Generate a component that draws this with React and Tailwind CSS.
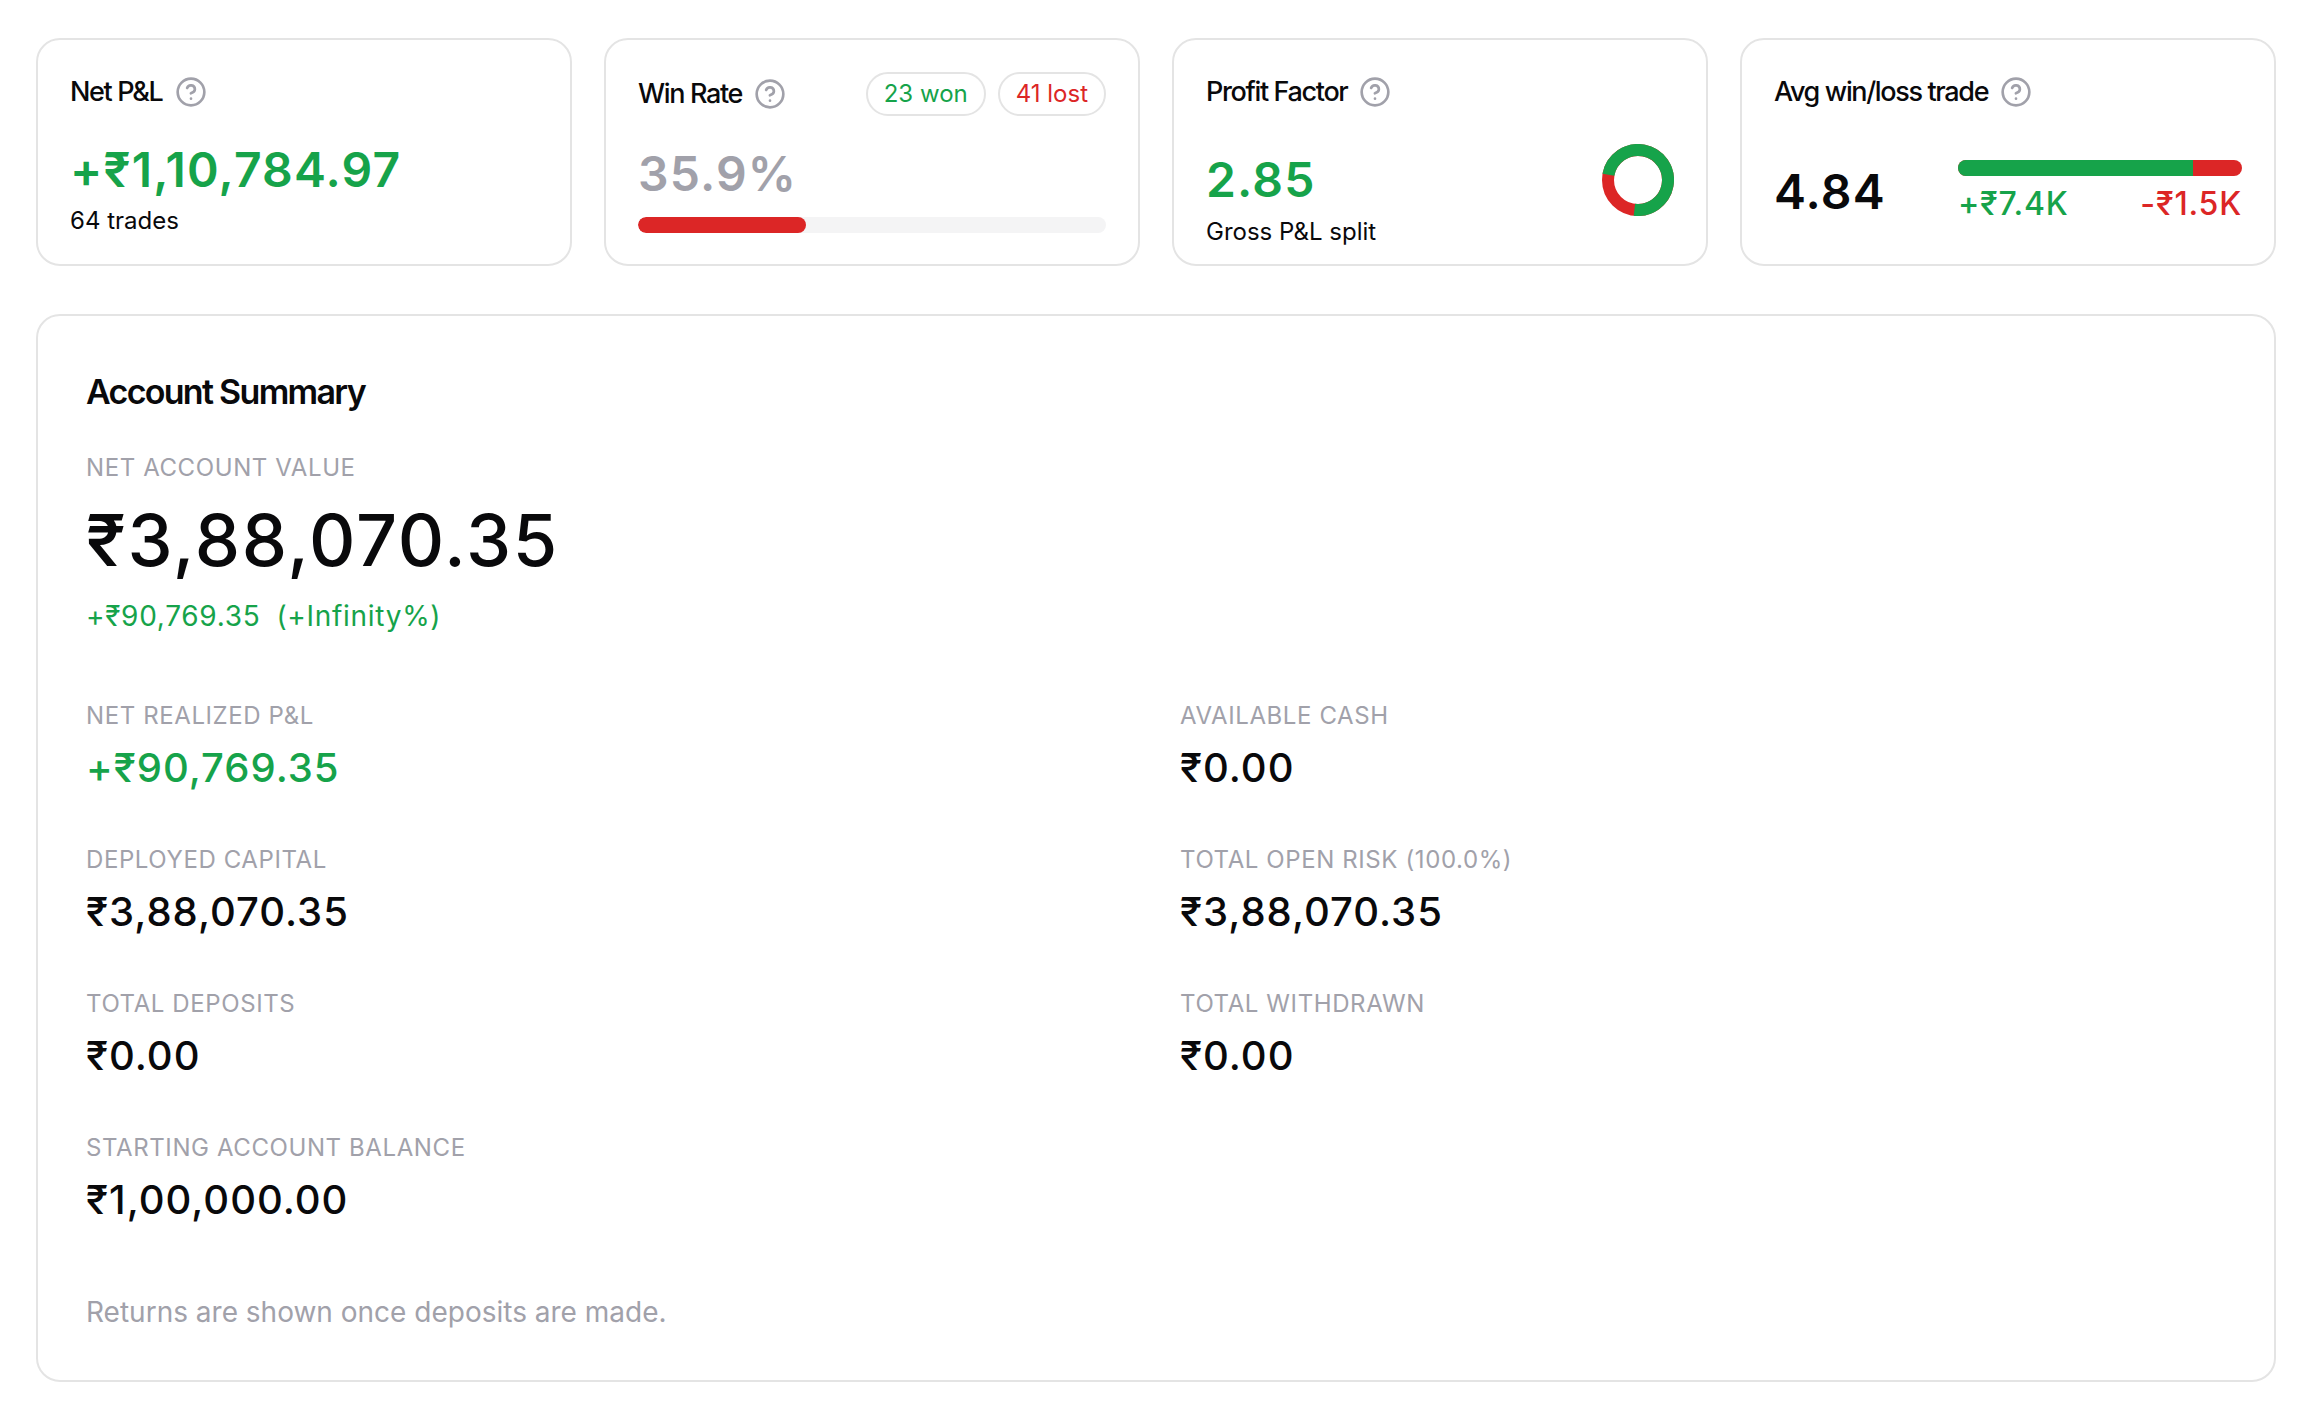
import { CircleHelp } from "lucide-react";

const summaryItems = [
  { label: "Net Realized P&L", value: "+₹90,769.35", positive: true },
  { label: "Available Cash", value: "₹0.00" },
  { label: "Deployed Capital", value: "₹3,88,070.35" },
  { label: "Total Open Risk (100.0%)", value: "₹3,88,070.35" },
  { label: "Total Deposits", value: "₹0.00" },
  { label: "Total Withdrawn", value: "₹0.00" },
  { label: "Starting Account Balance", value: "₹1,00,000.00" },
];

function StatCard({ title, badges, children }) {
  return (
    <section className="flex flex-col border-2 border-[#e4e4e4] rounded-3xl px-8 pt-8 pb-4">
      <div className="flex items-center justify-between">
        <div className="flex items-center gap-3">
          <h2 className="text-[27px] leading-10 font-medium tracking-tighter">{title}</h2>
          <button type="button" aria-label={`About ${title}`} className="text-[#a1a1aa]">
            <CircleHelp size={32} />
          </button>
        </div>
        {badges}
      </div>
      {children}
    </section>
  );
}

// Ring split between gross profit and gross loss
function SplitRing({ profit }) {
  const length = 2 * Math.PI * 30;
  return (
    <svg className="size-[72px]" viewBox="0 0 72 72" fill="none" strokeWidth="12" aria-hidden="true">
      <circle cx="36" cy="36" r="30" stroke="#dc2626" />
      <circle
        cx="36"
        cy="36"
        r="30"
        stroke="#16a34a"
        strokeDasharray={`${length * profit} ${length}`}
        transform="rotate(-170 36 36)"
      />
    </svg>
  );
}

export default function App() {
  const winRate = 35.9;
  const winShare = 82.9;

  return (
    <main className="bg-white text-[#09090b] font-['Inter',sans-serif] pt-[38px] pb-7 pl-9 pr-[34px] flex flex-col gap-12">
      {/* Stat cards */}
      <div className="grid grid-cols-4 gap-8">
        <StatCard title="Net P&L">
          <p className="mt-[26px] text-5xl leading-16 font-semibold tracking-wide text-[#16a34a]">+₹1,10,784.97</p>
          <p className="mt-[3px] text-2xl leading-8">64 trades</p>
        </StatCard>

        <StatCard
          title="Win Rate"
          badges={
            <div className="flex gap-3 text-2xl leading-8">
              <span className="border-2 border-[#e4e4e4] rounded-full px-4 py-1 text-[#16a34a]">23 won</span>
              <span className="border-2 border-[#e4e4e4] rounded-full px-4 py-1 text-[#dc2626]">41 lost</span>
            </div>
          }
        >
          <p className="mt-[26px] text-5xl leading-16 font-semibold tracking-wide text-[#a1a1aa]">{winRate}%</p>
          <div className="mt-[11px] h-4 rounded-full bg-[#f4f4f5] overflow-hidden">
            <div className="h-full rounded-full bg-[#dc2626]" style={{ width: `${winRate}%` }}></div>
          </div>
        </StatCard>

        <StatCard title="Profit Factor">
          <div className="mt-8 flex items-center justify-between">
            <p className="text-5xl leading-16 font-semibold tracking-wide text-[#16a34a]">2.85</p>
            <SplitRing profit={0.74} />
          </div>
          <p className="text-2xl leading-8">Gross P&L split</p>
        </StatCard>

        <StatCard title="Avg win/loss trade">
          <div className="mt-12 flex items-center gap-[72px]">
            <p className="text-5xl leading-16 font-semibold tracking-wide">4.84</p>
            <div className="flex-1">
              <div className="flex h-4 rounded-full bg-[#dc2626] overflow-hidden">
                <div className="h-full bg-[#16a34a]" style={{ width: `${winShare}%` }}></div>
              </div>
              <div className="mt-2 flex justify-between text-[32px] leading-10 font-medium tracking-wide">
                <span className="text-[#16a34a]">+₹7.4K</span>
                <span className="text-[#dc2626]">-₹1.5K</span>
              </div>
            </div>
          </div>
        </StatCard>
      </div>

      {/* Account summary */}
      <section className="border-2 border-[#e4e4e4] rounded-3xl p-12">
        <h2 className="text-[34px] leading-14 font-semibold tracking-tighter">Account Summary</h2>

        <p className="mt-8 text-2xl leading-8 tracking-wide uppercase text-[#a1a1aa]">Net Account Value</p>
        <p className="mt-4 text-7xl leading-20 font-medium tracking-wide">₹3,88,070.35</p>
        <p className="mt-4 flex gap-4 text-[28px] leading-10 tracking-wide text-[#16a34a]">
          <span>+₹90,769.35</span>
          <span>(+Infinity%)</span>
        </p>

        <dl className="mt-16 grid grid-cols-2 gap-12">
          {summaryItems.map((item) => (
            <div key={item.label}>
              <dt className="text-2xl leading-8 tracking-wide uppercase text-[#a1a1aa]">{item.label}</dt>
              <dd className={`mt-2 text-[40px] leading-14 font-medium tracking-wide ${item.positive ? "text-[#16a34a]" : ""}`}>
                {item.value}
              </dd>
            </div>
          ))}
        </dl>

        <p className="mt-16 text-[28px] leading-10 text-[#a1a1aa]">Returns are shown once deposits are made.</p>
      </section>
    </main>
  );
}
